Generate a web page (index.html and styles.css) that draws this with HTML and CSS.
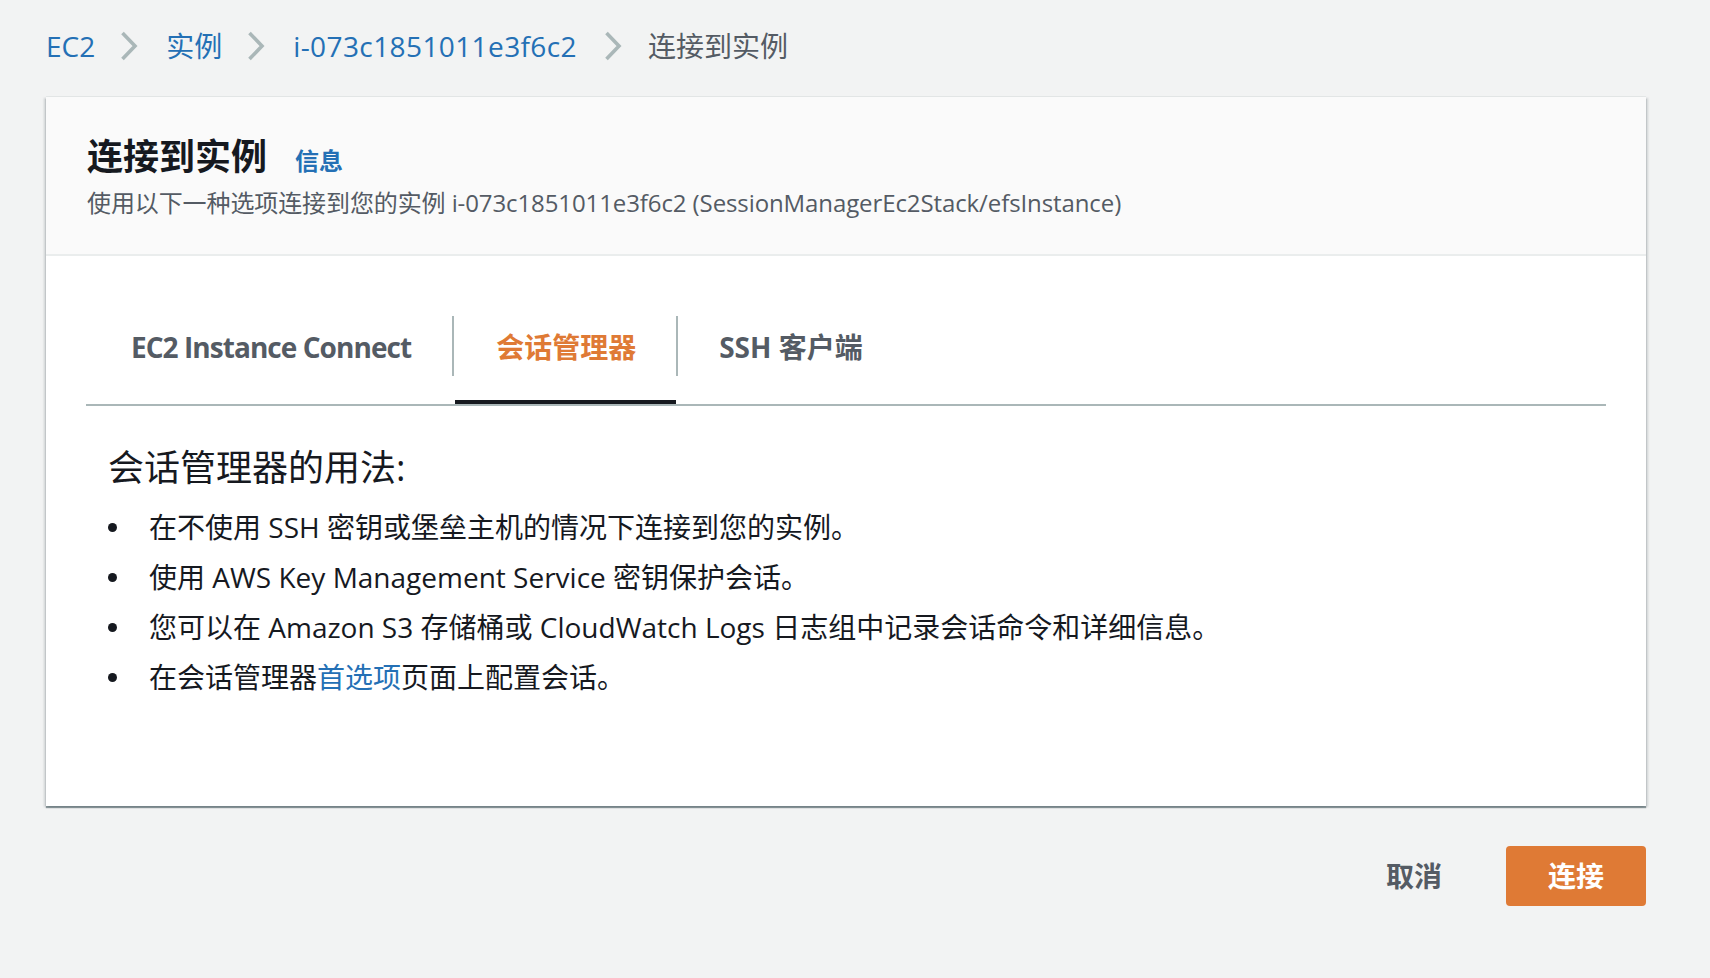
FILE: index.html
```html
<!DOCTYPE html>
<html lang="zh-CN">
<head>
<meta charset="utf-8">
<title>连接到实例</title>
<link rel="stylesheet" href="styles.css">
</head>
<body>
<div class="page">
  <nav class="crumbs">
    <a class="crumb-link" href="#">EC2</a>
    <svg class="chev" viewBox="0 0 18 30" width="18" height="30"><polyline points="2.5,2 15,15 2.5,28" fill="none" stroke="#aab7b8" stroke-width="3.6"/></svg>
    <a class="crumb-link" href="#">实例</a>
    <svg class="chev" viewBox="0 0 18 30" width="18" height="30"><polyline points="2.5,2 15,15 2.5,28" fill="none" stroke="#aab7b8" stroke-width="3.6"/></svg>
    <a class="crumb-link crumb-id" href="#">i-073c1851011e3f6c2</a>
    <svg class="chev chev-last" viewBox="0 0 18 30" width="18" height="30"><polyline points="2.5,2 15,15 2.5,28" fill="none" stroke="#aab7b8" stroke-width="3.6"/></svg>
    <span class="crumb-current">连接到实例</span>
  </nav>

  <section class="card">
    <header class="card-head">
      <div class="title-row">
        <h1 class="title">连接到实例</h1>
        <a class="info" href="#">信息</a>
      </div>
      <p class="subtitle">使用以下一种选项连接到您的实例 i-073c1851011e3f6c2 (SessionManagerEc2Stack/efsInstance)</p>
    </header>

    <div class="card-body">
      <div class="tabs">
        <div class="tab tab-latin">EC2 Instance Connect</div>
        <span class="tab-sep"></span>
        <div class="tab tab-active">会话管理器</div>
        <span class="tab-sep"></span>
        <div class="tab">SSH 客户端</div>
      </div>

      <div class="tab-content">
        <h2 class="usage-title">会话管理器的用法:</h2>
        <ul class="usage-list">
          <li>在不使用 SSH 密钥或堡垒主机的情况下连接到您的实例。</li>
          <li>使用 AWS Key Management Service 密钥保护会话。</li>
          <li>您可以在 Amazon S3 存储桶或 CloudWatch Logs 日志组中记录会话命令和详细信息。</li>
          <li>在会话管理器<a class="link" href="#">首选项</a>页面上配置会话。</li>
        </ul>
      </div>
    </div>
  </section>

  <div class="actions">
    <button class="btn btn-cancel" type="button">取消</button>
    <button class="btn btn-primary" type="button">连接</button>
  </div>
</div>
</body>
</html>
```

FILE: styles.css
```css
* { box-sizing: border-box; }

html, body {
  margin: 0;
  padding: 0;
  background: #f2f3f3;
}

body {
  font-family: "Open Sans", "Noto Sans CJK SC", sans-serif;
  color: #16191f;
  width: 1710px;
  height: 978px;
  overflow: hidden;
}

.page {
  padding: 26px 64px 0 46px;
}

/* breadcrumb */
.crumbs {
  display: flex;
  align-items: center;
  height: 40px;
  font-size: 28px;
  line-height: 40px;
}
.crumb-link {
  color: #2470b5;
  text-decoration: none;
}
.crumb-id {
  letter-spacing: 0.4px;
}
.crumb-current {
  color: #545b64;
}
.chev {
  display: block;
  margin: 0 28px 0 25px;
  flex: none;
}
.chev-last {
  margin: 0 26px 0 27px;
}

/* card */
.card {
  margin-top: 31px;
  background: #ffffff;
  box-shadow: 0 2px 1px 0 rgba(0, 28, 36, 0.4),
              2px 1px 2px 0 rgba(0, 28, 36, 0.15),
              -2px 1px 2px 0 rgba(0, 28, 36, 0.15),
              0 -1px 0 0 #e6e9e9;
  height: 709px;
}

.card-head {
  background: #fafafa;
  border-bottom: 2px solid #eaeded;
  padding: 38px 40px 35px 41px;
}
.title-row {
  display: flex;
  align-items: baseline;
}
.title {
  margin: 0;
  font-size: 36px;
  line-height: 44px;
  font-weight: 700;
  color: #16191f;
}
.info {
  margin-left: 28px;
  font-size: 24px;
  font-weight: 700;
  color: #2470b5;
  text-decoration: none;
}
.subtitle {
  margin: 8px 0 0;
  font-size: 24px;
  line-height: 32px;
  color: #545b64;
  letter-spacing: -0.1px;
}

/* tabs */
.card-body {
  padding: 30px 40px 0;
}
.tabs {
  display: flex;
  align-items: stretch;
  border-bottom: 2px solid #aab7b8;
  padding-left: 4px;
}
.tab {
  font-size: 28px;
  line-height: 40px;
  font-weight: 700;
  color: #545b64;
  padding: 41px 41px 33px;
  border-bottom: 4px solid transparent;
}
.tab-latin {
  letter-spacing: -0.95px;
  padding-right: 41px;
}
.tab-active {
  color: #df7a35;
  border-bottom-color: #16191f;
  padding-right: 40px;
}
.tab-sep {
  align-self: flex-start;
  width: 2px;
  height: 60px;
  margin-top: 30px;
  background: #aab7b8;
  flex: none;
}
.tab-sep + .tab-active { margin-left: 1px; }

/* content */
.tab-content {
  padding: 40px 0 0 22px;
}
.usage-title {
  margin: 0 0 12px;
  font-size: 36px;
  line-height: 44px;
  font-weight: 400;
  color: #16191f;
}
.usage-list {
  margin: 0;
  padding: 0;
  list-style: none;
}
.usage-list li {
  display: flex;
  align-items: center;
  font-size: 28px;
  line-height: 50px;
  color: #16191f;
}
.usage-list li::before {
  content: "";
  flex: none;
  width: 9px;
  height: 9px;
  border-radius: 50%;
  background: #16191f;
  margin: 0 32px 0 0;
}
.link {
  color: #2470b5;
  text-decoration: none;
}

/* actions */
.actions {
  display: flex;
  justify-content: flex-end;
  align-items: center;
  margin-top: 40px;
}
.btn {
  font-family: "Open Sans", "Noto Sans CJK SC", sans-serif;
  font-size: 28px;
  font-weight: 700;
  height: 60px;
  line-height: 60px;
  border: none;
  border-radius: 4px;
  cursor: pointer;
}
.btn-cancel {
  background: transparent;
  color: #545b64;
  padding: 0 40px;
  margin-right: 24px;
}
.btn-primary {
  background: #df7a35;
  color: #ffffff;
  padding: 0 42px;
}
```
